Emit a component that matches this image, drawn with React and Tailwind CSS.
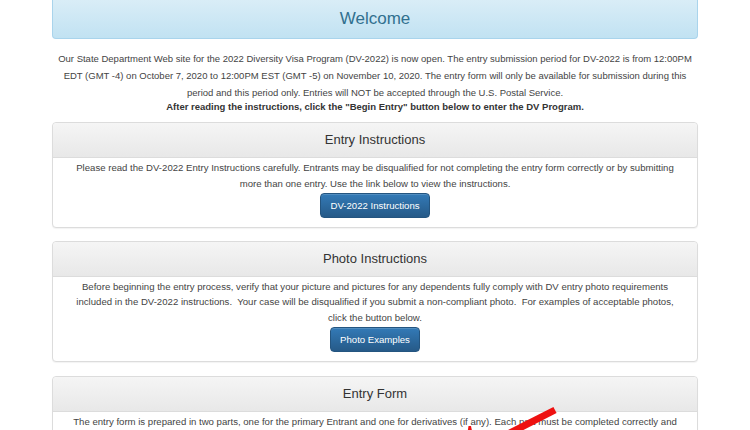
const font = { fontFamily: '"Liberation Sans", Arial, Helvetica, sans-serif' };

const Panel = ({ title, children, button, className = "" }) => {
  return (
    <div
      className={
        "rounded-[4px] border border-[#dcdcdc] bg-white shadow-[0_1px_1px_rgba(0,0,0,0.05)] " +
        className
      }
    >
      <div className="flex h-[35px] items-center justify-center rounded-t-[4px] border-b border-[#dcdcdc] bg-gradient-to-b from-[#f5f5f5] to-[#e8e8e8] text-[13px] text-[#333]">
        {title}
      </div>
      <div className="px-[15px] pt-[2px] pb-[9px] text-center text-[9.6px] leading-[15.5px] text-[#444]">
        {children}
        {button && (
          <div className="mt-[2px] flex justify-center">
            <button className="h-[24.5px] rounded-[4px] border border-[#245580] bg-gradient-to-b from-[#337ab7] to-[#265a88] px-[9px] text-[9.6px] text-white shadow-[inset_0_1px_0_rgba(255,255,255,0.15)]">
              {button}
            </button>
          </div>
        )}
      </div>
    </div>
  );
};

export default function App() {
  return (
    <div className="relative h-[430px] w-[750px] overflow-hidden bg-white" style={font}>
      <div className="mx-auto w-[646px]">
        <div className="flex h-[39px] items-center justify-center rounded-b-[4px] border-x border-b border-[#a9d4ec] bg-gradient-to-b from-[#d9edf7] to-[#c1e2f2] text-[17px] text-[#31708f]">
          Welcome
        </div>

        <p className="mt-[11px] text-center text-[9.5px] leading-[17px] text-[#444]">
          Our State Department Web site for the 2022 Diversity Visa Program (DV-2022) is now open. The entry
          submission period for DV-2022 is from 12:00PM EDT (GMT -4) on October 7, 2020 to 12:00PM EST (GMT -5)
          on November 10, 2020. The entry form will only be available for submission during this period and this
          period only. Entries will NOT be accepted through the U.S. Postal Service.
        </p>
        <p className="mt-[-1px] text-center text-[9.5px] font-bold leading-[14px] text-[#333]">
          After reading the instructions, click the "Begin Entry" button below to enter the DV Program.
        </p>

        <Panel title="Entry Instructions" button="DV-2022 Instructions" className="mt-[8px]">
          <p>
            Please read the DV-2022 Entry Instructions carefully. Entrants may be disqualified for not completing the
            entry form correctly or by submitting more than one entry. Use the link below to view the instructions.
          </p>
        </Panel>

        <Panel title="Photo Instructions" button="Photo Examples" className="mt-[13px]">
          <p>
            Before beginning the entry process, verify that your picture and pictures for any dependents fully comply
            with DV entry photo requirements included in the DV-2022 instructions.&nbsp; Your case will be
            disqualified if you submit a non-compliant photo.&nbsp; For examples of acceptable photos, click the
            button below.
          </p>
        </Panel>

        <Panel title="Entry Form" className="mt-[14px]">
          <p>
            The entry form is prepared in two parts, one for the primary Entrant and one for derivatives (if any).
            Each part must be completed correctly and submitted before the entry can be accepted.
          </p>
        </Panel>
      </div>

      <svg className="pointer-events-none absolute left-0 top-0" width="750" height="430" viewBox="0 0 750 430">
        <line x1="555" y1="410" x2="500" y2="438" stroke="#ee1111" strokeWidth="7" />
        <polygon points="468.5,426 471,426 473,436 467,436" fill="#ee1111" />
      </svg>
    </div>
  );
}
